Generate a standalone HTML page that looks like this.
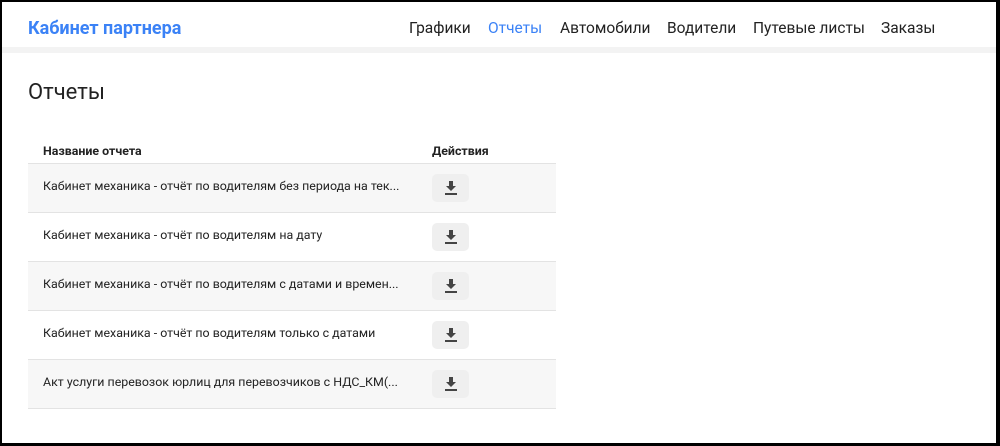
<!DOCTYPE html><html><head><meta charset="utf-8"><style>
*{margin:0;padding:0;box-sizing:border-box}
body{width:1000px;height:446px;background:#000;font-family:Roboto,"Liberation Sans",sans-serif;overflow:hidden}
.frame{position:absolute;left:2px;top:2px;width:994px;height:441px;background:#fff;overflow:hidden}
.hdr{position:absolute;left:0;top:0;width:100%;height:51px;background:#fff;border-bottom:6px solid #f3f3f3}
.logo{position:absolute;left:26px;top:16px;font-size:18px;font-weight:bold;color:#3b82f6}
.nav{position:absolute;top:17px;font-size:15.5px;color:#222}
h1{position:absolute;left:26px;top:78px;font-size:22px;font-weight:normal;color:#222}
table{position:absolute;left:26px;top:138px;width:528px;border-collapse:collapse;font-size:12.4px;color:#222}
th{height:23px;text-align:left;font-weight:bold;padding-left:15px;border-bottom:1px solid #e3e3e3}
td{height:49px;padding-left:15px;padding-bottom:3px;border-bottom:1px solid #e3e3e3}
td.a{padding-bottom:0}
tr.o td{background:#f7f7f7}
.b{width:37px;height:28px;background:#efefef;border-radius:5px;display:flex;align-items:center;justify-content:center}
</style></head><body><div class="frame">
<div class="hdr"><div class="logo">Кабинет партнера</div>
<span class="nav" style="left:407px">Графики</span>
<span class="nav" style="left:486px;color:#3b82f6">Отчеты</span>
<span class="nav" style="left:558px">Автомобили</span>
<span class="nav" style="left:665px">Водители</span>
<span class="nav" style="left:751px">Путевые листы</span>
<span class="nav" style="left:879px">Заказы</span></div>
<h1>Отчеты</h1>
<table><tr><th style="width:389px">Название отчета</th><th style="padding-left:15px">Действия</th></tr>
<tr class="o"><td>Кабинет механика - отчёт по водителям без периода на тек...</td><td class="a"><div class="b"><svg width="14" height="16" viewBox="0 0 14 16"><path d="M5 1h4v5h3l-5 5-5-5h3z" fill="#444"/><rect x="1" y="13" width="12" height="2" fill="#444"/></svg></div></td></tr>
<tr><td>Кабинет механика - отчёт по водителям на дату</td><td class="a"><div class="b"><svg width="14" height="16" viewBox="0 0 14 16"><path d="M5 1h4v5h3l-5 5-5-5h3z" fill="#444"/><rect x="1" y="13" width="12" height="2" fill="#444"/></svg></div></td></tr>
<tr class="o"><td>Кабинет механика - отчёт по водителям с датами и времен...</td><td class="a"><div class="b"><svg width="14" height="16" viewBox="0 0 14 16"><path d="M5 1h4v5h3l-5 5-5-5h3z" fill="#444"/><rect x="1" y="13" width="12" height="2" fill="#444"/></svg></div></td></tr>
<tr><td>Кабинет механика - отчёт по водителям только с датами</td><td class="a"><div class="b"><svg width="14" height="16" viewBox="0 0 14 16"><path d="M5 1h4v5h3l-5 5-5-5h3z" fill="#444"/><rect x="1" y="13" width="12" height="2" fill="#444"/></svg></div></td></tr>
<tr class="o"><td>Акт услуги перевозок юрлиц для перевозчиков с НДС_КМ(...</td><td class="a"><div class="b"><svg width="14" height="16" viewBox="0 0 14 16"><path d="M5 1h4v5h3l-5 5-5-5h3z" fill="#444"/><rect x="1" y="13" width="12" height="2" fill="#444"/></svg></div></td></tr>
</table></div></body></html>
